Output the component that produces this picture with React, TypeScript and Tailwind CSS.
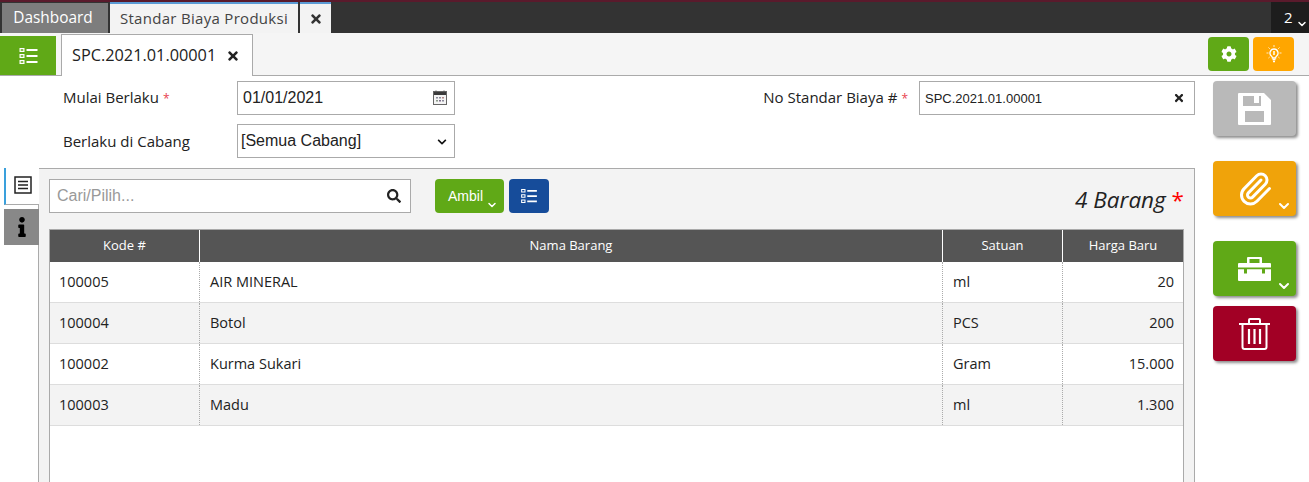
import { ChevronDown, Paperclip } from "lucide-react";
import { FaChevronDown, FaCog, FaInfo, FaSearch, FaTimes } from "react-icons/fa";

const rows = [
    { kode: "100005", nama: "AIR MINERAL", satuan: "ml", harga: "20" },
    { kode: "100004", nama: "Botol", satuan: "PCS", harga: "200" },
    { kode: "100002", nama: "Kurma Sukari", satuan: "Gram", harga: "15.000" },
    { kode: "100003", nama: "Madu", satuan: "ml", harga: "1.300" },
];

function ListIcon({ className }: { className: string }) {
    return (
        <svg viewBox="0 0 18 16" className={className} fill="currentColor">
            <path fillRule="evenodd" d="M0 0h5v4H0zM1.200 1.200v1.600h2.600V1.200zM0 6h5v4H0zM1.200 7.200v1.600h2.600V7.200zM0 12h5v4H0zM1.200 13.200v1.600h2.600v-1.600z" />
            <path d="M7 1h11v2H7zM7 7h11v2H7zM7 13h11v2H7z" />
        </svg>
    );
}

function DocIcon() {
    return (
        <svg viewBox="0 0 18 18" className="h-[18px] w-[18px] text-[#222]" fill="none" stroke="currentColor" strokeWidth="1.500">
            <rect x="1" y="1" width="16" height="16" />
            <path d="M4 5.500h10M4 9h10M4 12.500h10" />
        </svg>
    );
}

function CalendarIcon() {
    return (
        <svg viewBox="0 0 14 15" className="absolute right-[8px] top-[9px] h-[15px] w-[14px]">
            <rect x="0.500" y="1.500" width="13" height="13" fill="#f4f4f4" stroke="#666" />
            <rect x="1" y="2" width="12" height="3" fill="#3a3a3a" />
            <path d="M3 0.500v2M11 0.500v2" stroke="#555" />
            <path d="M3 7h2v1.500H3zM6 7h2v1.500H6z" fill="#8a8a9a" />
            <path d="M9 7h2v1.500H9z" fill="#b58a8a" />
            <path d="M3 10h2v1.500H3z" fill="#8a9a8a" />
            <path d="M6 10h2v1.500H6z" fill="#7d6a8a" />
            <path d="M9 10h2v1.500H9z" fill="#8a8a9a" />
        </svg>
    );
}

function BulbIcon() {
    return (
        <svg viewBox="0 0 16 18" className="h-[18px] w-4" fill="none" stroke="currentColor">
            <path strokeWidth="1.300" d="M8 4a4 4 0 0 0-2.400 7.200c.6.500.8 1 .8 1.800h3.200c0-.8.200-1.300.8-1.800A4 4 0 0 0 8 4z" />
            <path strokeWidth="1.500" d="M8 6v4M6.500 14.500h3M7 16.500h2" />
            <path strokeWidth="0.800" d="M8 0v2M2.500 2.500l1.300 1.300M13.500 2.500l-1.300 1.300M0.500 8h2M13.500 8h2M2.500 13l1.200-1M13.500 13l-1.200-1" />
        </svg>
    );
}

function SaveIcon() {
    return (
        <svg viewBox="0 0 33 32" className="h-8 w-[33px]" fill="currentColor">
            <path fillRule="evenodd" d="M1 0h25l7 7v24a1 1 0 0 1-1 1H1a1 1 0 0 1-1-1V1a1 1 0 0 1 1-1zM5 3v10h18V3h-2v7h-5V3zM7 18v11h19V18z" />
        </svg>
    );
}

function ToolboxIcon() {
    return (
        <svg viewBox="0 0 33 24" className="h-6 w-[33px]">
            <path fill="white" fillRule="evenodd" d="M9 6V1a1 1 0 0 1 1-1h13a1 1 0 0 1 1 1v5zM11.500 2v4h10V2z" />
            <path fill="white" d="M1 6h31a1 1 0 0 1 1 1v16a1 1 0 0 1-1 1H1a1 1 0 0 1-1-1V7a1 1 0 0 1 1-1z" />
            <path fill="#60a917" d="M0 10.500h33v1.800h-6v4.200h-3v-4.200H9v4.200H6v-4.200H0z" />
        </svg>
    );
}

function TrashIcon() {
    return (
        <svg viewBox="0 0 31 32" className="h-8 w-[31px]" fill="none" stroke="currentColor" strokeWidth="2">
            <path d="M0 6h31M10 6V2a1 1 0 0 1 1-1h9a1 1 0 0 1 1 1v4" />
            <path d="M3.500 6v23a2 2 0 0 0 2 2h20a2 2 0 0 0 2-2V6" />
            <path strokeWidth="2.200" d="M10 11v15M15.500 11v15M21 11v15" />
        </svg>
    );
}

function Required() {
    return <span className="ml-1 text-xs text-[#e8434f]">*</span>;
}

function ActionButton({ color, chevron, children }: { color: string; chevron?: boolean; children: React.ReactNode }) {
    return (
        <button className={`relative flex h-[55px] w-[83px] items-center justify-center rounded text-white shadow-[2px_2px_3px_rgba(0,0,0,0.45)] ${color}`}>
            {children}
            {chevron && <ChevronDown strokeWidth={3} className="absolute bottom-0.5 right-1 h-4 w-4" />}
        </button>
    );
}

export default function App() {
    return (
        <main className="h-[482px] overflow-hidden bg-white font-['Open_Sans',sans-serif] text-[14.500px] text-[#222]">
            {/* Top tabs */}
            <div className="flex h-[33px] items-end gap-0.5 border-t-2 border-[#5a1a2c] bg-[#333] pl-0.5">
                <div className="flex h-[30px] w-[106px] items-center justify-center bg-[#7d7d7d] pr-1 text-[15.400px] text-white">Dashboard</div>
                <div className="flex h-[31px] w-[188px] items-center justify-center border-t-2 border-[#5b9bd5] bg-[#f3f3f3] text-[15px] tracking-[0.3px] text-[#444]">Standar Biaya Produksi</div>
                <div className="flex h-[31px] w-[31px] items-center justify-center border-t-2 border-[#5b9bd5] bg-[#f3f3f3]">
                    <FaTimes className="h-3.5 w-3.5 text-[#333]" />
                </div>
                <div className="relative ml-auto h-[31px] w-[38px] bg-[#1d1d1d] pl-[13px] pt-[4px] text-[15px] text-white">
                    2
                    <ChevronDown strokeWidth={3} className="absolute bottom-[3px] right-[1px] h-3 w-3" />
                </div>
            </div>

            {/* Document tabs */}
            <div className="flex h-[43px] items-end border-b border-[#aaa] bg-[#f5f5f5]">
                <button className="flex h-[39px] w-[56px] items-center justify-center bg-[#60a917] text-white">
                    <ListIcon className="h-4 w-[19px]" />
                </button>
                <div className="-mb-px ml-[5px] flex h-[42px] w-[192px] items-center gap-2.5 border border-b-0 border-[#aaa] bg-white pl-2.5 text-[16.300px]">
                    <span>SPC.2021.01.00001</span>
                    <FaTimes className="h-3.5 w-3.5" />
                </div>
                <div className="mb-1 ml-auto mr-[15px] flex gap-1">
                    <button className="flex h-[34px] w-[41px] items-center justify-center rounded-sm bg-[#60a917] text-white">
                        <FaCog className="h-4 w-4" />
                    </button>
                    <button className="flex h-[34px] w-[41px] items-center justify-center rounded-sm bg-[#ffa600] text-white">
                        <BulbIcon />
                    </button>
                </div>
            </div>

            <div className="flex">
                <div className="w-[1195px] pt-[5px]">
                    {/* Header form */}
                    <div className="flex justify-between pl-[63px] text-[15px]">
                        <div className="flex flex-col gap-[9px]">
                            <div className="flex items-center">
                                <label className="w-[174px] pb-0.5">Mulai Berlaku<Required /></label>
                                <div className="relative">
                                    <input readOnly value="01/01/2021" className="h-[34px] w-[218px] border border-[#aaa] bg-white pl-[5px] font-['Liberation_Sans',sans-serif] text-base outline-none" />
                                    <CalendarIcon />
                                </div>
                            </div>
                            <div className="flex items-center">
                                <label className="w-[174px]">Berlaku di Cabang</label>
                                <div className="relative">
                                    <select className="h-[34px] w-[218px] appearance-none border border-[#aaa] bg-white pl-[3px] font-['Liberation_Sans',sans-serif] text-base outline-none">
                                        <option>[Semua Cabang]</option>
                                    </select>
                                    <FaChevronDown className="absolute right-[8px] top-[13px] h-2.5 w-2.5 text-[#111]" />
                                </div>
                            </div>
                        </div>
                        <div className="flex h-[34px] items-center">
                            <label className="mr-[11px] pb-0.5">No Standar Biaya #<Required /></label>
                            <div className="relative">
                                <input readOnly value="SPC.2021.01.00001" className="h-[34px] w-[276px] border border-[#aaa] bg-white pl-[5px] font-['Liberation_Sans',sans-serif] text-[13px] outline-none" />
                                <FaTimes className="absolute right-[10px] top-[11px] h-3 w-3" />
                            </div>
                        </div>
                    </div>

                    <div className="mt-[10px] flex">
                        {/* Side tabs */}
                        <div className="relative z-10 -mr-px ml-1 flex w-[35px] flex-col">
                            <div className="flex h-[37px] w-[35px] justify-center border-b border-l-2 border-b-[#aaa] border-l-[#3aa0dc] bg-white pt-2">
                                <DocIcon />
                            </div>
                            <div className="mt-1 flex h-[36px] items-center justify-center bg-[#888]">
                                <FaInfo className="h-5 w-5 text-black" />
                            </div>
                        </div>

                        {/* Items panel */}
                        <div className="h-[320px] flex-1 border border-b-0 border-[#aaa] bg-[#f3f3f3] pl-2.5 pr-[10px] pt-2.5">
                            <div className="flex h-[50px] items-start">
                                <div className="relative">
                                    <input placeholder="Cari/Pilih..." className="h-[34px] w-[362px] border border-[#aaa] bg-white pl-[7px] font-['Liberation_Sans',sans-serif] text-base outline-none placeholder:text-[#999]" />
                                    <FaSearch className="absolute right-[10px] top-[10px] h-3.5 w-3.5 text-[#222]" />
                                </div>
                                <button className="relative ml-6 h-[34px] w-[69px] rounded bg-[#60a917] pr-[8px] font-['Liberation_Sans',sans-serif] text-sm text-white">
                                    Ambil
                                    <ChevronDown strokeWidth={3} className="absolute bottom-0.5 right-[6px] h-3 w-3" />
                                </button>
                                <button className="ml-[5px] flex h-[34px] w-10 items-center justify-center rounded bg-[#164c9a] text-white">
                                    <ListIcon className="h-[14px] w-4" />
                                </button>
                                <div className="ml-auto mt-[7px] text-[22.500px] italic leading-7">
                                    4 Barang <span className="not-italic text-[#f00]">*</span>
                                </div>
                            </div>

                            <div className="h-[300px] border-x border-t border-[#aaa] bg-white">
                                <div className="grid h-[32px] grid-cols-[150px_743px_120px_1fr] items-center bg-[#555] text-center text-[13px] text-white">
                                    <div className="flex h-full items-center justify-center border-r border-white">Kode #</div>
                                    <div className="flex h-full items-center justify-center border-r border-white">Nama Barang</div>
                                    <div className="flex h-full items-center justify-center border-r border-white">Satuan</div>
                                    <div>Harga Baru</div>
                                </div>
                                {rows.map((row, i) => (
                                    <div key={row.kode} className={`grid h-[41px] grid-cols-[150px_743px_120px_1fr] border-b border-[#ddd] ${i % 2 ? "bg-[#f3f3f3]" : "bg-white"}`}>
                                        <div className="flex items-center border-r border-dotted border-[#aaa] pb-px pl-[9px]">{row.kode}</div>
                                        <div className="flex items-center border-r border-dotted border-[#aaa] pb-px pl-[10px]">{row.nama}</div>
                                        <div className="flex items-center border-r border-dotted border-[#aaa] pb-px pl-[10px]">{row.satuan}</div>
                                        <div className="flex items-center justify-end pb-px pr-[9px]">{row.harga}</div>
                                    </div>
                                ))}
                            </div>
                        </div>
                    </div>
                </div>

                {/* Action buttons */}
                <div className="ml-[18px] flex flex-col pt-[5px]">
                    <ActionButton color="bg-[#b9b9b9]"><SaveIcon /></ActionButton>
                    <div className="mt-[25px]">
                        <ActionButton color="bg-[#f0a30a]" chevron><Paperclip strokeWidth={2} className="h-9 w-9" /></ActionButton>
                    </div>
                    <div className="mt-[25px]">
                        <ActionButton color="bg-[#60a917]" chevron><ToolboxIcon /></ActionButton>
                    </div>
                    <div className="mt-[10px]">
                        <ActionButton color="bg-[#a20025]"><TrashIcon /></ActionButton>
                    </div>
                </div>
            </div>
        </main>
    );
}
